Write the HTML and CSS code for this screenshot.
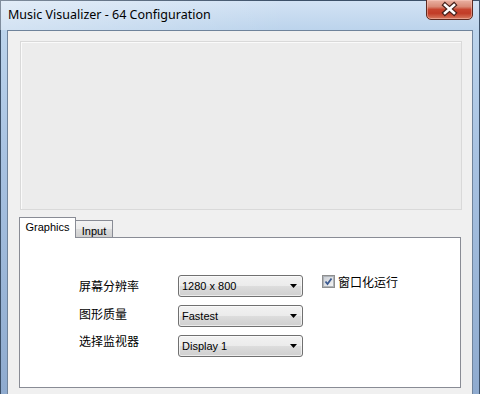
FILE: index.html
```html
<!DOCTYPE html>
<html>
<head>
    <meta charset="UTF-8">
    <title>Music Visualizer - 64 Configuration</title>
    <link rel="stylesheet" href="styles.css">
</head>
<body>
    <div class="window">
        <div class="titlebar">
            <span class="title">Music Visualizer - 64 Configuration</span>
            <button class="close" title="Close">
                <svg width="45" height="19" viewBox="0 0 45 19">
                    <path d="M18 5 L27 13 M27 5 L18 13" stroke="#45201a" stroke-width="5" stroke-linecap="square"/>
                    <path d="M18 5 L27 13 M27 5 L18 13" stroke="#ffffff" stroke-width="2.6" stroke-linecap="square"/>
                </svg>
            </button>
        </div>

        <div class="client">
            <div class="preview"></div>

            <div class="tabs">
                <div class="tab-strip">
                    <div class="tab active">Graphics</div>
                    <div class="tab">Input</div>
                </div>
                <div class="tab-panel">
                    <div class="settings">
                        <div class="labels">
                            <span>屏幕分辨率</span>
                            <span>图形质量</span>
                            <span>选择监视器</span>
                        </div>
                        <div class="combos">
                            <div class="combo">
                                <span>1280 x 800</span>
                                <svg width="7" height="4" viewBox="0 0 7 4"><path d="M0 0 H7 L3.5 4 Z" fill="#000"/></svg>
                            </div>
                            <div class="combo">
                                <span>Fastest</span>
                                <svg width="7" height="4" viewBox="0 0 7 4"><path d="M0 0 H7 L3.5 4 Z" fill="#000"/></svg>
                            </div>
                            <div class="combo">
                                <span>Display 1</span>
                                <svg width="7" height="4" viewBox="0 0 7 4"><path d="M0 0 H7 L3.5 4 Z" fill="#000"/></svg>
                            </div>
                        </div>
                        <label class="check">
                            <span class="box">
                                <svg width="9" height="9" viewBox="0 0 9 9">
                                    <path d="M1.5 4.5 L3.5 7 L7.5 1.5" fill="none" stroke="#3b5a91" stroke-width="1.8"/>
                                </svg>
                            </span>
                            窗口化运行
                        </label>
                    </div>
                </div>
            </div>
        </div>
    </div>
</body>
</html>
```

FILE: styles.css
```css
* {
    margin: 0;
    padding: 0;
    box-sizing: border-box;
}

body {
    width: 480px;
    height: 394px;
    overflow: hidden;
    font-family: "Liberation Sans", Arial, sans-serif;
    font-size: 11px;
    color: #000;
}

.window {
    width: 480px;
    height: 394px;
    display: flex;
    flex-direction: column;
    background: linear-gradient(to bottom, #d3e3f4 0, #bcd4ec 30px, #a9c3e2 150px, #8fabcf 394px);
    box-shadow: inset 1px 0 0 #3c5068, inset -1px 0 0 #3c5068, inset 0 1px 0 #3c5068;
}

.titlebar {
    height: 30px;
    display: flex;
    justify-content: space-between;
    align-items: flex-start;
    padding: 0 7px 0 8px;
    background: linear-gradient(to right, rgba(255, 255, 255, 0.35), rgba(255, 255, 255, 0) 60%);
}

.title {
    font-family: "Noto Sans", "Liberation Sans", sans-serif;
    font-size: 12.5px;
    line-height: 16px;
    padding-top: 7px;
    color: #000;
}

.close {
    width: 47px;
    height: 21px;
    margin-top: -1px;
    display: flex;
    align-items: center;
    justify-content: center;
    border: 1px solid #5e2a20;
    border-radius: 0 0 5px 5px;
    background: linear-gradient(to bottom, #eab2a3 0, #d98a76 35%, #c7452f 50%, #c13c27 70%, #d77a5f 100%);
    box-shadow: inset 0 0 0 1px rgba(255, 210, 200, 0.45);
}

.client {
    flex: 1;
    margin: 0 7px;
    background: #f0f0f0;
    border: 1px solid #6f839b;
    border-bottom: none;
}

.preview {
    height: 169px;
    margin: 10px 10px 0 12px;
    background: #ececec;
    border: 1px solid #d9d9d9;
    box-shadow: inset 1px 1px 0 #fafafa;
}

.tabs {
    margin: 7px 11px 0 11px;
}

.tab-strip {
    height: 20px;
    display: flex;
    align-items: flex-end;
}

.tab {
    height: 17px;
    padding: 1px 0 0 0;
    border: 1px solid #898c95;
    border-bottom: none;
    text-align: center;
    line-height: 15px;
    background: linear-gradient(to bottom, #f3f3f3 0, #ebebeb 50%, #dddddd 50%, #cfcfcf 100%);
}

.tab + .tab {
    width: 38px;
    margin-left: -1px;
    padding-top: 3px;
}

.tab.active {
    position: relative;
    z-index: 1;
    width: 57px;
    height: 21px;
    margin-bottom: -1px;
    padding-top: 2px;
    background: #fff;
}

.tab-panel {
    height: 151px;
    background: #fff;
    border: 1px solid #898c95;
}

.settings {
    display: flex;
    padding: 34px 0 0 59px;
}

.labels {
    width: 99px;
    display: flex;
    flex-direction: column;
    font-family: "Noto Sans CJK SC", "Noto Sans", sans-serif;
    font-size: 12px;
    line-height: 27.5px;
}

.combos {
    width: 125px;
    display: flex;
    flex-direction: column;
    gap: 8px;
    padding-top: 3px;
}

.combo {
    height: 22px;
    display: flex;
    align-items: center;
    justify-content: space-between;
    padding: 0 5px 0 3px;
    border: 1px solid #707070;
    border-radius: 3px;
    background: linear-gradient(to bottom, #f2f2f2 0, #ebebeb 50%, #dddddd 50%, #cfcfcf 100%);
    box-shadow: inset 0 0 0 1px rgba(255, 255, 255, 0.6);
}

.check {
    display: flex;
    align-items: center;
    height: 17px;
    margin: 1px 0 0 19px;
    font-family: "Noto Sans CJK SC", "Noto Sans", sans-serif;
    font-size: 12px;
}

.box {
    width: 13px;
    height: 13px;
    margin-right: 3px;
    display: flex;
    align-items: center;
    justify-content: center;
    border: 1px solid #8e8f8f;
    background: #fff;
}

.box svg {
    border: 1px solid #aeb3b9;
    width: 11px;
    height: 11px;
    padding: 0;
    background: linear-gradient(135deg, #cbcfd5, #f4f4f4);
}
```
